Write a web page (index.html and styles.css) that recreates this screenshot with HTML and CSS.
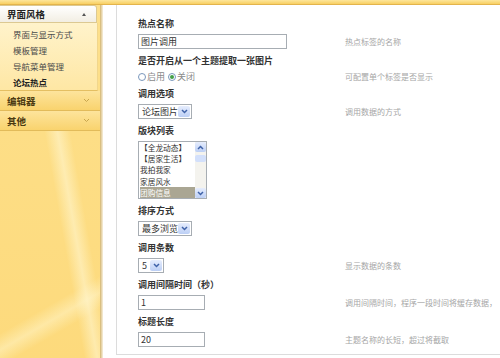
FILE: index.html
```html
<!DOCTYPE html>
<html lang="zh-CN">
<head>
    <meta charset="UTF-8">
    <title>论坛热点</title>
    <link rel="stylesheet" href="styles.css">
</head>
<body>
    <div class="topbar"></div>
    <div class="layout">
        <aside class="sidebar">
            <div class="menu-head menu-head--open">
                <span>界面风格</span>
                <span class="caret-up"></span>
            </div>
            <ul class="submenu">
                <li>界面与显示方式</li>
                <li>模板管理</li>
                <li>导航菜单管理</li>
                <li class="current">论坛热点</li>
            </ul>
            <div class="menu-head">
                <span>编辑器</span>
                <svg class="chev" width="7" height="5" viewBox="0 0 7 5"><polyline points="1,1 3.5,3.5 6,1" fill="none" stroke="#c9a64e" stroke-width="1"/></svg>
            </div>
            <div class="menu-head">
                <span>其他</span>
                <svg class="chev" width="7" height="5" viewBox="0 0 7 5"><polyline points="1,1 3.5,3.5 6,1" fill="none" stroke="#c9a64e" stroke-width="1"/></svg>
            </div>
        </aside>

        <main class="panel">
            <div class="field">
                <div class="field-label">热点名称</div>
                <div class="field-row">
                    <div class="field-ctrl"><input class="text-input text-input--long" type="text" value="图片调用"></div>
                    <div class="field-desc">热点标签的名称</div>
                </div>
            </div>

            <div class="field">
                <div class="field-label">是否开启从一个主题提取一张图片</div>
                <div class="field-row">
                    <div class="field-ctrl radio-row">
                        <span class="radio"></span><span class="radio-text">启用</span>
                        <span class="radio radio--on"></span><span class="radio-text">关闭</span>
                    </div>
                    <div class="field-desc">可配置单个标签是否显示</div>
                </div>
            </div>

            <div class="field">
                <div class="field-label">调用选项</div>
                <div class="field-row">
                    <div class="field-ctrl">
                        <div class="select select--mid">
                            <span>论坛图片</span>
                            <span class="select-btn"><svg width="7" height="5" viewBox="0 0 7 5"><polyline points="1,1 3.5,3.5 6,1" fill="none" stroke="#3f62a8" stroke-width="1.5"/></svg></span>
                        </div>
                    </div>
                    <div class="field-desc">调用数据的方式</div>
                </div>
            </div>

            <div class="field">
                <div class="field-label">版块列表</div>
                <div class="field-row">
                    <div class="field-ctrl">
                        <div class="listbox">
                            <ul class="listbox-items">
                                <li>【全龙动态】</li>
                                <li>【居家生活】</li>
                                <li>我拍我家</li>
                                <li>家居风水</li>
                                <li class="selected">团购信息</li>
                            </ul>
                            <div class="scrollbar">
                                <span class="scroll-btn"><svg width="7" height="5" viewBox="0 0 7 5"><polyline points="1,4 3.5,1.5 6,4" fill="none" stroke="#3f62a8" stroke-width="1.5"/></svg></span>
                                <span class="scroll-track"><span class="scroll-thumb"></span></span>
                                <span class="scroll-btn"><svg width="7" height="5" viewBox="0 0 7 5"><polyline points="1,1 3.5,3.5 6,1" fill="none" stroke="#3f62a8" stroke-width="1.5"/></svg></span>
                            </div>
                        </div>
                    </div>
                </div>
            </div>

            <div class="field">
                <div class="field-label">排序方式</div>
                <div class="field-row">
                    <div class="field-ctrl">
                        <div class="select select--mid">
                            <span>最多浏览</span>
                            <span class="select-btn"><svg width="7" height="5" viewBox="0 0 7 5"><polyline points="1,1 3.5,3.5 6,1" fill="none" stroke="#3f62a8" stroke-width="1.5"/></svg></span>
                        </div>
                    </div>
                </div>
            </div>

            <div class="field">
                <div class="field-label">调用条数</div>
                <div class="field-row">
                    <div class="field-ctrl">
                        <div class="select select--small">
                            <span>5</span>
                            <span class="select-btn"><svg width="7" height="5" viewBox="0 0 7 5"><polyline points="1,1 3.5,3.5 6,1" fill="none" stroke="#3f62a8" stroke-width="1.5"/></svg></span>
                        </div>
                    </div>
                    <div class="field-desc">显示数据的条数</div>
                </div>
            </div>

            <div class="field">
                <div class="field-label">调用间隔时间（秒）</div>
                <div class="field-row">
                    <div class="field-ctrl"><input class="text-input" type="text" value="1"></div>
                    <div class="field-desc">调用间隔时间，程序一段时间将缓存数据，</div>
                </div>
            </div>

            <div class="field">
                <div class="field-label">标题长度</div>
                <div class="field-row">
                    <div class="field-ctrl"><input class="text-input" type="text" value="20"></div>
                    <div class="field-desc">主题名称的长短，超过将截取</div>
                </div>
            </div>
        </main>
    </div>
</body>
</html>
```

FILE: styles.css
```css
html, body {
    margin: 0;
    padding: 0;
}
body {
    font-family: "Noto Sans CJK SC", "Liberation Sans", sans-serif;
    font-size: 9px;
    color: #333;
    background: #fff;
    overflow: hidden;
    width: 500px;
    height: 358px;
}
.topbar {
    height: 4px;
    background: linear-gradient(#fde69c, #f8cf62);
    border-bottom: 1px solid #e3b44c;
}
.layout {
    display: flex;
    align-items: flex-start;
    height: 353px;
}

/* sidebar */
.sidebar {
    width: 100px;
    height: 100%;
    flex-shrink: 0;
    background:
        linear-gradient(80deg, rgba(255,255,255,0) 52%, rgba(255,248,214,0.55) 60%, rgba(255,255,255,0) 68%),
        linear-gradient(150deg, rgba(255,255,255,0) 80%, rgba(255,246,205,0.5) 84%, rgba(255,255,255,0) 88%),
        linear-gradient(#fde08c, #fdda7c);
    box-shadow: 1px 0 0 #d9bf82, 2px 0 0 #e6d3a8, 3px 0 0 #f1e6cc;
}
.menu-head {
    display: flex;
    align-items: center;
    justify-content: space-between;
    box-sizing: border-box;
    height: 20px;
    padding: 0 10px 0 7px;
    font-size: 9.5px;
    font-weight: bold;
    color: #4b3a12;
    background: linear-gradient(#fde49c, #f9d36e);
    border-bottom: 1px solid #e2bb5a;
}
.menu-head--open {
    height: 18px;
    margin-right: 3px;
    color: #222;
    background: linear-gradient(#ffffff, #f2eee3);
    border: 1px solid #dcc992;
    border-left: none;
    border-radius: 0 3px 0 0;
}
.caret-up {
    width: 0;
    height: 0;
    border-left: 2.5px solid transparent;
    border-right: 2.5px solid transparent;
    border-bottom: 3px solid #555;
}
.submenu {
    list-style: none;
    margin: 0 2px 0 0;
    padding: 3px 0 0;
    background: linear-gradient(#fff3cb, #fee7a4);
    border-right: 1px solid #f1d68c;
    border-bottom: 1px solid #e4bf62;
}
.submenu li {
    height: 16px;
    line-height: 16px;
    padding-left: 13px;
    font-size: 8.5px;
    color: #4a4a4a;
}
.submenu .current {
    font-weight: bold;
    color: #222;
}

/* content panel */
.panel {
    flex: 1;
    margin-left: 16px;
    padding: 13px 0 1px 21px;
    border-left: 1px solid #dcdcdc;
    border-bottom: 1px solid #dcdcdc;
    overflow: hidden;
}
.field {
    margin-bottom: 6px;
}
.field-label {
    line-height: 12px;
    margin-bottom: 4px;
    font-weight: bold;
    color: #333;
    white-space: nowrap;
}
.field-row {
    display: flex;
    align-items: center;
}
.field-ctrl {
    width: 207px;
    flex-shrink: 0;
}
.field-desc {
    font-size: 8px;
    color: #a6a6a6;
    white-space: nowrap;
}

.text-input {
    display: block;
    box-sizing: border-box;
    width: 67px;
    height: 15px;
    margin: 0;
    padding: 0 2px;
    border: 1px solid #a7adb3;
    font-family: inherit;
    font-size: 9px;
    color: #333;
    outline: none;
}
.text-input--long {
    width: 149px;
}

.radio-row {
    display: flex;
    align-items: center;
    height: 11px;
}
.radio {
    box-sizing: border-box;
    width: 8px;
    height: 8px;
    border: 1px solid #7a97bc;
    border-radius: 50%;
    background: #fff;
    display: flex;
    align-items: center;
    justify-content: center;
}
.radio--on::after {
    content: "";
    width: 4px;
    height: 4px;
    border-radius: 50%;
    background: #44a047;
}
.radio-text {
    color: #8a8a8a;
    margin: 0 3px 0 1px;
}

.select {
    display: flex;
    align-items: center;
    justify-content: space-between;
    box-sizing: border-box;
    height: 15px;
    padding: 0 1px 0 3px;
    border: 1px solid #a7adb3;
    background: #fff;
}
.select--mid {
    width: 54px;
}
.select--small {
    width: 26px;
}
.select-btn {
    display: flex;
    align-items: center;
    justify-content: center;
    width: 12px;
    height: 11px;
    border-radius: 2px;
    background: linear-gradient(#e6edfd, #bccff5);
}

.listbox {
    display: flex;
    box-sizing: border-box;
    width: 69px;
    height: 58px;
    border: 1px solid #a7adb3;
    background: #fff;
}
.listbox-items {
    flex: 1;
    list-style: none;
    margin: 0;
    padding: 0 0 0 1px;
    overflow: hidden;
    font-size: 7.7px;
}
.listbox-items li {
    line-height: 11.2px;
    height: 11.2px;
    white-space: nowrap;
    color: #333;
}
.listbox-items .selected {
    background: #aaa693;
    color: #fff;
}
.scrollbar {
    width: 11px;
    display: flex;
    flex-direction: column;
    background: #f4f3ee;
}
.scroll-btn {
    display: flex;
    align-items: center;
    justify-content: center;
    height: 10px;
    border-radius: 2px;
    background: linear-gradient(#e6edfd, #bccff5);
}
.scroll-track {
    flex: 1;
    padding-top: 3px;
}
.scroll-thumb {
    display: block;
    height: 7px;
    border-radius: 2px;
    background: #d3e0fb;
}
```
